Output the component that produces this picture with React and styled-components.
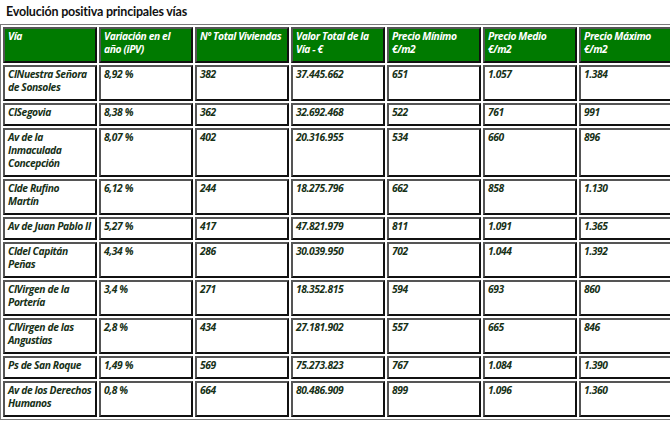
import React from 'react';
import styled, { createGlobalStyle } from 'styled-components';

const GlobalStyle = createGlobalStyle`
    html, body {
        margin: 0;
        padding: 0;
        background: #ffffff;
        overflow: hidden;
    }
`;

const Page = styled.div`
    width: 670px;
    height: 426px;
    overflow: hidden;
    font-family: 'Open Sans', 'Noto Sans', sans-serif;
`;

const Title = styled.div`
    font-family: Lato, 'Open Sans', sans-serif;
    font-weight: 700;
    font-size: 12.5px;
    letter-spacing: -0.2px;
    color: #111;
    padding: 4px 0 0 6px;
    height: 20px;
`;

const Table = styled.table`
    border-collapse: separate;
    border-spacing: 2px;
    border: 1px solid #7a7a7a;
    border-right: none;
    table-layout: fixed;
    width: 674px;
`;

// line breaks follow the original document's wrapping
const Cell = styled.td`
    width: 85px;
    border: 2px solid;
    border-color: #555 #111 #111 #555;
    padding: 1px 2px 5px 3px;
    vertical-align: top;
    white-space: pre;
    overflow: hidden;
    font-size: 10.3px;
    line-height: 13px;
    font-style: italic;
    font-weight: 700;
    letter-spacing: -0.4px;
    color: ${(p) => (p.$head ? '#ffffff' : '#173117')};
    background: ${(p) => (p.$head ? '#007a00' : '#ffffff')};
    text-align: left;
`;

const headers = [
    'Vía',
    'Variación en el\naño (iPV)',
    'Nº Total Viviendas',
    'Valor Total de la\nVía - €',
    'Precio Mínimo\n€/m2',
    'Precio Medio\n€/m2',
    'Precio Máximo\n€/m2',
];

const rows = [
    ['ClNuestra Señora\nde Sonsoles', '8,92 %', '382', '37.445.662', '651', '1.057', '1.384'],
    ['ClSegovia', '8,38 %', '362', '32.692.468', '522', '761', '991'],
    ['Av de la\nInmaculada\nConcepción', '8,07 %', '402', '20.316.955', '534', '660', '896'],
    ['Clde Rufino\nMartín', '6,12 %', '244', '18.275.796', '662', '858', '1.130'],
    ['Av de Juan Pablo II', '5,27 %', '417', '47.821.979', '811', '1.091', '1.365'],
    ['Cldel Capitán\nPeñas', '4,34 %', '286', '30.039.950', '702', '1.044', '1.392'],
    ['ClVirgen de la\nPortería', '3,4 %', '271', '18.352.815', '594', '693', '860'],
    ['ClVirgen de las\nAngustias', '2,8 %', '434', '27.181.902', '557', '665', '846'],
    ['Ps de San Roque', '1,49 %', '569', '75.273.823', '767', '1.084', '1.390'],
    ['Av de los Derechos\nHumanos', '0,8 %', '664', '80.486.909', '899', '1.096', '1.360'],
];

export default function App() {
    return (
        <Page>
            <GlobalStyle />
            <Title>Evolución positiva principales vías</Title>
            <Table>
                <tbody>
                    <tr>
                        {headers.map((h) => (
                            <Cell as="th" key={h} $head>
                                {h}
                            </Cell>
                        ))}
                    </tr>
                    {rows.map((r) => (
                        <tr key={r[0]}>
                            {r.map((v, i) => (
                                <Cell key={i}>{v}</Cell>
                            ))}
                        </tr>
                    ))}
                </tbody>
            </Table>
        </Page>
    );
}
